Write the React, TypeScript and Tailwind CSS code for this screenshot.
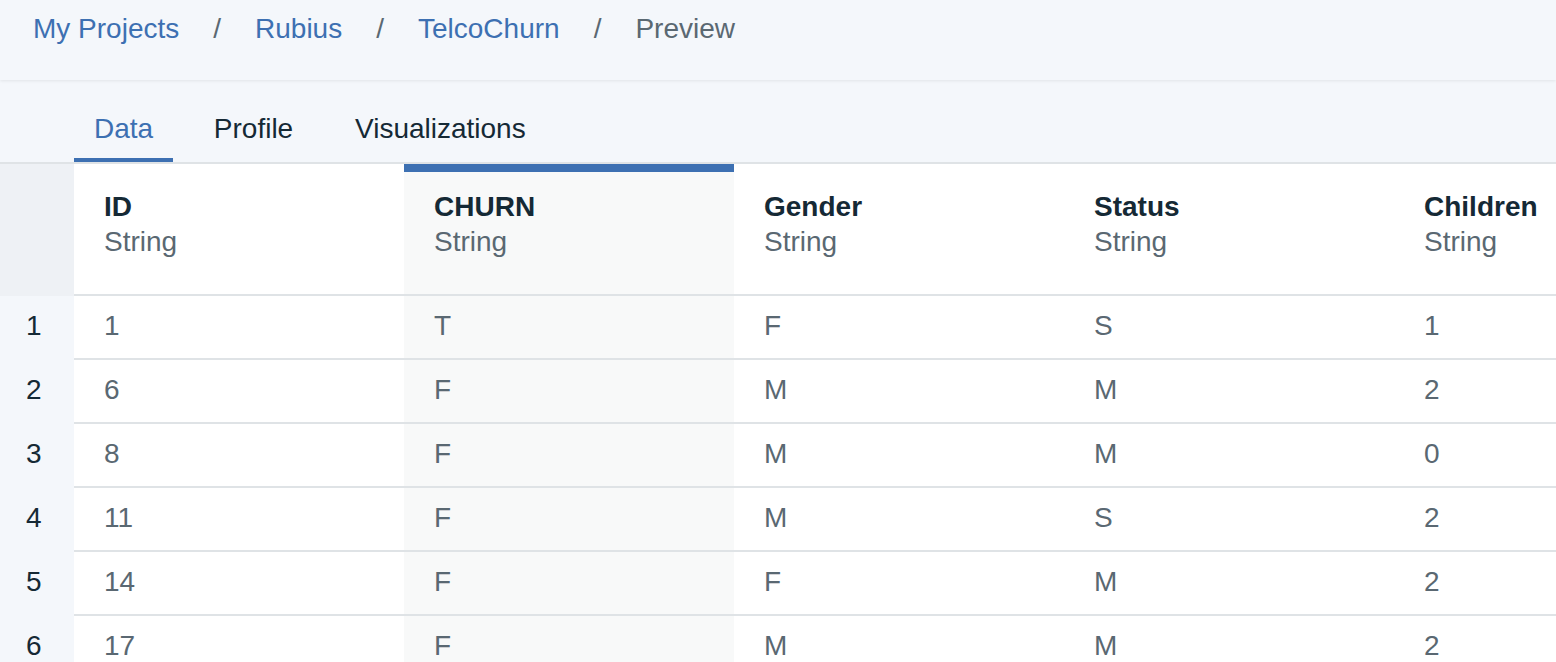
const columns = ['ID', 'CHURN', 'Gender', 'Status', 'Children'];

const rows = [
  ['1', 'T', 'F', 'S', '1'],
  ['6', 'F', 'M', 'M', '2'],
  ['8', 'F', 'M', 'M', '0'],
  ['11', 'F', 'M', 'S', '2'],
  ['14', 'F', 'F', 'M', '2'],
  ['17', 'F', 'M', 'M', '2'],
];

const crumbs = ['My Projects', 'Rubius', 'TelcoChurn'];
const tabs = [
  { label: 'Data', w: 'w-[99px]' },
  { label: 'Profile', w: 'w-[123px]' },
  { label: 'Visualizations', w: 'px-[21px]' },
];

// the selected column gets the blue bar and a faint tint
const SELECTED = 1;

export default function App() {
  return (
    <div className="h-[662px] w-[1556px] overflow-hidden bg-[#f4f7fb] font-['Liberation_Sans',Arial,sans-serif] text-[28px] leading-[35px]">
      <div className="relative z-10 h-[80px] pl-[33px] pt-[11px] shadow-[0_1px_3px_rgba(0,0,0,0.08)]">
        <div className="flex items-start">
          {crumbs.map((c) => (
            <div key={c} className="flex">
              <span className="text-[#3d70b2]">{c}</span>
              <span className="mx-[34px] text-[#5a6872]">/</span>
            </div>
          ))}
          <span className="text-[#5a6872]">Preview</span>
        </div>
      </div>

      <div className="flex border-b-2 border-[#dfe3e6] pl-[74px]">
        {tabs.map((t, i) => (
          <div
            key={t.label}
            className={
              'mr-[19px] border-b-4 pb-[12px] pt-[31px] text-center ' +
              t.w +
              ' ' +
              (i === 0 ? 'border-[#3d70b2] text-[#3d70b2]' : 'border-transparent text-[#152935]')
            }
          >
            {t.label}
          </div>
        ))}
      </div>

      <div className="flex">
        <div className="w-[74px] shrink-0">
          <div className="h-[132px] bg-[#eef1f5]" />
          {rows.map((_, i) => (
            <div key={i} className="h-[64px] pl-[26px] pt-[12px] text-[#152935]">
              {i + 1}
            </div>
          ))}
        </div>

        {columns.map((col, c) => {
          const sel = c === SELECTED;
          return (
            <div key={col} className={'w-[330px] shrink-0 ' + (sel ? 'bg-[#f8f9f9]' : 'bg-white')}>
              <div className="h-[132px] border-b-2 border-[#dfe3e6]">
                <div className={'h-[8px] ' + (sel ? 'bg-[#3d70b2]' : '')} />
                <div className="pl-[30px] pt-[17px]">
                  <div className="font-bold text-[#152935]">{col}</div>
                  <div className="text-[#5a6872]">String</div>
                </div>
              </div>
              {rows.map((r, i) => (
                <div key={i} className="h-[64px] border-b-2 border-[#dfe3e6] pl-[30px] pt-[12px] text-[#5a6872]">
                  {r[c]}
                </div>
              ))}
            </div>
          );
        })}
      </div>
    </div>
  );
}
